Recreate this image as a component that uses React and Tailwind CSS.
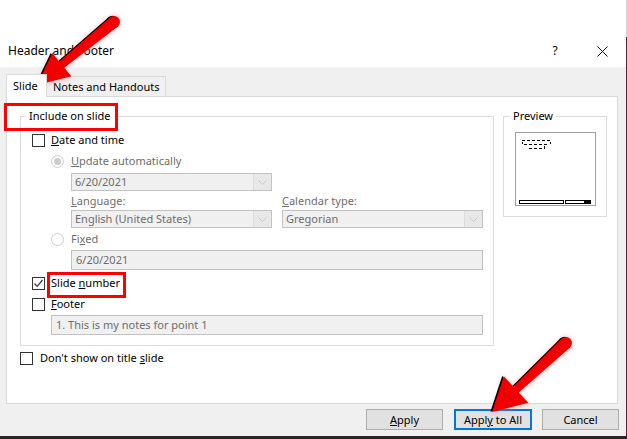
import React from 'react';

const ui = "font-['Noto_Sans',sans-serif] text-[11px] leading-[16px]";

function CheckBox({ checked }) {
    return (
        <span className="w-[13px] h-[13px] border border-[#333333] bg-white flex items-center justify-center shrink-0">
            {checked && (
                <svg width="11" height="11" viewBox="0 0 11 11">
                    <path d="M1.5 5.5 L4.2 8.3 L9.5 2" fill="none" stroke="#333" strokeWidth="1.2" />
                </svg>
            )}
        </span>
    );
}

function Radio({ selected }) {
    return (
        <span className="w-[13px] h-[13px] rounded-full border border-[#cccccc] bg-white flex items-center justify-center shrink-0">
            {selected && <span className="w-[7px] h-[7px] rounded-full bg-[#cccccc]" />}
        </span>
    );
}

function Combo({ value }) {
    return (
        <div className="w-[201px] h-[18px] border border-[#c2c2c2] bg-[#f0f0f0] flex items-stretch">
            <span className="flex-1 pl-[3px] flex items-center text-[#6d6d6d]">{value}</span>
            <span className="w-[18px] bg-[#e8e8e8] border-l border-[#dcdcdc] flex items-center justify-center">
                <svg width="9" height="5" viewBox="0 0 9 5">
                    <path d="M0.5 0.5 L4.5 4.5 L8.5 0.5" fill="none" stroke="#c4c4c4" strokeWidth="1" />
                </svg>
            </span>
        </div>
    );
}

function TextBox({ value, width }) {
    return (
        <div className={`${width} h-[20px] border border-[#c2c2c2] bg-[#f0f0f0] pl-[4px] flex items-center text-[#6d6d6d]`}>
            {value}
        </div>
    );
}

function Arrows() {
    return (
        <svg className="absolute left-0 top-0 pointer-events-none" width="627" height="439" viewBox="0 0 627 439">
            <defs>
                <filter id="glow" x="-20%" y="-20%" width="140%" height="140%">
                    <feGaussianBlur stdDeviation="2" />
                </filter>
            </defs>
            {/* top arrow -> Slide tab */}
            <g>
                <g filter="url(#glow)" opacity="0.35" fill="#ff6060">
                    <circle cx="114" cy="22" r="7" />
                    <polygon points="118.8,27.6 65,69 72.5,78 36,87 51,52 58.5,61 110,16" />
                </g>
                <g fill="#000" transform="translate(-1.6,-0.2)">
                    <circle cx="114" cy="22" r="6" />
                    <polygon points="117.8,26.6 64.3,67.8 71.3,76.3 37,85 52.3,53.1 59.3,61.6 110.2,17.4" />
                </g>
                <g fill="#f00000">
                    <circle cx="114" cy="22" r="6" />
                    <polygon points="117.8,26.6 64.3,67.8 71.3,76.3 37,85 52.3,53.1 59.3,61.6 110.2,17.4" />
                </g>
            </g>
            {/* bottom arrow -> Apply to All */}
            <g>
                <g filter="url(#glow)" opacity="0.35" fill="#ff6060">
                    <circle cx="566" cy="343" r="7" />
                    <polygon points="571,348.5 519.5,393.5 529.5,404 491,414 503,375 512.5,385.5 561,337.5" />
                </g>
                <g fill="#000" transform="translate(-1.6,-0.2)">
                    <circle cx="566" cy="343" r="6" />
                    <polygon points="570.1,347.4 518.8,392.4 528.4,402.7 492,412 503.8,376.3 513.4,386.6 561.9,338.6" />
                </g>
                <g fill="#f00000">
                    <circle cx="566" cy="343" r="6" />
                    <polygon points="570.1,347.4 518.8,392.4 528.4,402.7 492,412 503.8,376.3 513.4,386.6 561.9,338.6" />
                </g>
            </g>
        </svg>
    );
}

export default function App() {
    return (
        <div className={`relative w-[627px] h-[439px] overflow-hidden bg-[#2a2225] text-black ${ui}`}>
            <div className="flex">
                <div className="w-[626px] h-[436px] bg-[#f0f0f0] flex flex-col">
                    {/* title bar */}
                    <div className="h-[67px] bg-white flex items-start pt-[43px] pl-[8px]">
                        <span className="flex-1 text-[12px]">Header and Footer</span>
                        <span className="w-[10px] text-center mr-[37px] text-[12px]">?</span>
                        <svg className="mt-[3px] mr-[18px]" width="11" height="11" viewBox="0 0 11 11">
                            <path d="M0.5 0.5 L10.5 10.5 M10.5 0.5 L0.5 10.5" stroke="#111" strokeWidth="1" />
                        </svg>
                    </div>

                    {/* tabs */}
                    <div className="pt-[7px] pl-[6px]">
                        <div className="flex items-end h-[22px]">
                            <div className="relative z-10 w-[41px] h-[23px] -mb-px bg-white border border-b-0 border-[#d9d9d9] pl-[6px] pt-[3px] whitespace-nowrap">
                                Slide
                            </div>
                            <div className="w-[120px] h-[20px] -ml-px bg-[#f0f0f0] border border-b-0 border-[#d9d9d9] pl-[6px] pt-[2px] whitespace-nowrap">
                                Notes and Handouts
                            </div>
                        </div>

                        {/* panel */}
                        <div className="w-[612px] h-[308px] bg-white border border-[#d9d9d9] pt-[11px] pl-[13px]">
                            <div className="flex items-start">
                                <fieldset className="w-[474px] border border-[#dcdcdc] pb-[10px]">
                                    <legend className="ml-[5px] px-[3px]">Include on slide</legend>
                                    <div className="pl-[11px]">
                                        <div className="mt-[8px] h-[16px] flex items-center gap-[6px]">
                                            <CheckBox />
                                            <span><span className="underline">D</span>ate and time</span>
                                        </div>
                                        <div className="ml-[19px] mt-[5px] h-[16px] flex items-center gap-[7px] text-[#6d6d6d]">
                                            <Radio selected />
                                            <span><span className="underline">U</span>pdate automatically</span>
                                        </div>
                                        <div className="ml-[39px] mt-[4px]">
                                            <Combo value="6/20/2021" />
                                        </div>
                                        <div className="ml-[39px] mt-[2px] h-[16px] flex items-center text-[#6d6d6d]">
                                            <span className="w-[211px]"><span className="underline">L</span>anguage:</span>
                                            <span><span className="underline">C</span>alendar type:</span>
                                        </div>
                                        <div className="ml-[39px] mt-[1px] flex gap-[10px]">
                                            <Combo value="English (United States)" />
                                            <Combo value="Gregorian" />
                                        </div>
                                        <div className="ml-[19px] mt-[3px] h-[16px] flex items-center gap-[7px] text-[#6d6d6d]">
                                            <Radio />
                                            <span>Fi<span className="underline">x</span>ed</span>
                                        </div>
                                        <div className="ml-[39px] mt-[3px]">
                                            <TextBox value="6/20/2021" width="w-[412px]" />
                                        </div>
                                        <div className="mt-[5px] h-[16px] flex items-center gap-[6px]">
                                            <CheckBox checked />
                                            <span>Slide <span className="underline">n</span>umber</span>
                                        </div>
                                        <div className="mt-[5px] h-[16px] flex items-center gap-[6px]">
                                            <CheckBox />
                                            <span><span className="underline">F</span>ooter</span>
                                        </div>
                                        <div className="ml-[19px] mt-[3px]">
                                            <TextBox value="1. This is my notes for point 1" width="w-[432px]" />
                                        </div>
                                    </div>
                                </fieldset>

                                <fieldset className="ml-[9px] w-[104px] border border-[#dcdcdc] pb-[10px]">
                                    <legend className="ml-[6px] px-[3px]">Preview</legend>
                                    <div className="pl-[11px]">
                                        <div className="mt-[8px] w-[81px] h-[74px] border border-[#a0a0a0] bg-white">
                                            <svg width="79" height="72" viewBox="0 0 79 72">
                                                <g stroke="#000" strokeWidth="1" fill="none" strokeDasharray="3 2">
                                                    <path d="M6 7.5 H35" />
                                                    <path d="M8 11.5 H33" />
                                                    <path d="M13 15.5 H29" />
                                                </g>
                                                <path d="M6.5 9 V11 M34.5 9 V11 M28.5 13 V15" stroke="#000" strokeWidth="1" />
                                                <rect x="3.5" y="67.5" width="44" height="3" fill="#fff" stroke="#000" />
                                                <rect x="49.5" y="67.5" width="25" height="3" fill="#fff" stroke="#000" />
                                                <rect x="68" y="67" width="7" height="4" fill="#000" />
                                            </svg>
                                        </div>
                                    </div>
                                </fieldset>
                            </div>

                            <div className="mt-[4px] h-[16px] flex items-center gap-[7px]">
                                <CheckBox />
                                <span>Don't show on title <span className="underline">s</span>lide</span>
                            </div>
                        </div>
                    </div>

                    {/* buttons */}
                    <div className="mt-[5px] flex justify-end pr-[7px]">
                        <button className="w-[77px] h-[21px] bg-[#e1e1e1] border border-[#adadad]">
                            <span className="underline">A</span>pply
                        </button>
                        <button className="ml-[11px] w-[78px] h-[21px] bg-[#e1e1e1] border-2 border-[#0078d7]">
                            Appl<span className="underline">y</span> to All
                        </button>
                        <button className="ml-[10px] w-[77px] h-[21px] bg-[#e1e1e1] border border-[#adadad]">
                            Cancel
                        </button>
                    </div>
                </div>
                <div className="w-[1px] h-[436px] flex flex-col">
                    <div className="h-[37px] bg-[#d6d6d6]" />
                    <div className="flex-1 bg-[#5c1f33]" />
                </div>
            </div>

            {/* red highlight boxes */}
            <div className="absolute left-[4px] top-[103px] w-[114px] h-[28px] border-[3px] border-[#ff0000]" />
            <div className="absolute left-[47px] top-[272px] w-[79px] h-[26px] border-[3px] border-[#ff0000]" />

            <Arrows />
        </div>
    );
}
